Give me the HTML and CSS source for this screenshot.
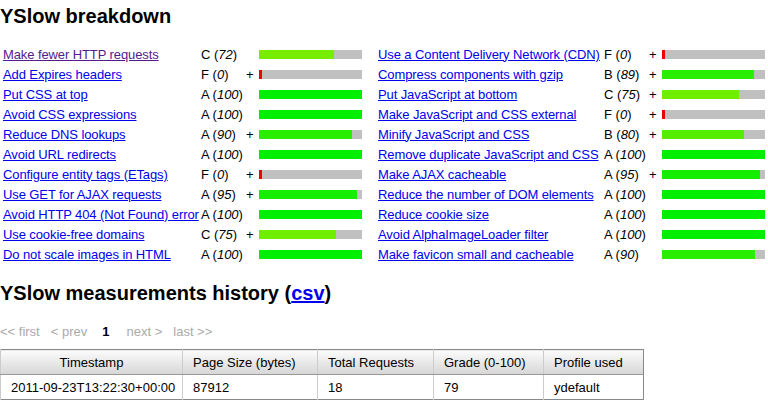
FILE: index.html
```html
<!DOCTYPE html>
<html lang="en">
<head>
    <meta charset="UTF-8">
    <title>YSlow breakdown</title>
    <link rel="stylesheet" href="styles.css">
</head>
<body>
    <h1 class="title">YSlow breakdown</h1>

    <div class="breakdown">
        <div class="rules rules-left">
            <a href="#" class="rule-name visited">Make fewer HTTP requests</a>
            <span class="grade">C (<i>72</i>)</span><span class="plus"></span>
            <span class="bar"><span class="fill" style="width: 73%; background: #77ee00;"></span></span>

            <a href="#" class="rule-name">Add Expires headers</a>
            <span class="grade">F (<i>0</i>)</span><span class="plus">+</span>
            <span class="bar"><span class="fill" style="width: 3px; background: #ee0000;"></span></span>

            <a href="#" class="rule-name">Put CSS at top</a>
            <span class="grade">A (<i>100</i>)</span><span class="plus"></span>
            <span class="bar"><span class="fill" style="width: 100%; background: #00ee00;"></span></span>

            <a href="#" class="rule-name">Avoid CSS expressions</a>
            <span class="grade">A (<i>100</i>)</span><span class="plus"></span>
            <span class="bar"><span class="fill" style="width: 100%; background: #00ee00;"></span></span>

            <a href="#" class="rule-name">Reduce DNS lookups</a>
            <span class="grade">A (<i>90</i>)</span><span class="plus">+</span>
            <span class="bar"><span class="fill" style="width: 90%; background: #2aee00;"></span></span>

            <a href="#" class="rule-name">Avoid URL redirects</a>
            <span class="grade">A (<i>100</i>)</span><span class="plus"></span>
            <span class="bar"><span class="fill" style="width: 100%; background: #00ee00;"></span></span>

            <a href="#" class="rule-name">Configure entity tags (ETags)</a>
            <span class="grade">F (<i>0</i>)</span><span class="plus">+</span>
            <span class="bar"><span class="fill" style="width: 3px; background: #ee0000;"></span></span>

            <a href="#" class="rule-name">Use GET for AJAX requests</a>
            <span class="grade">A (<i>95</i>)</span><span class="plus">+</span>
            <span class="bar"><span class="fill" style="width: 95%; background: #15ee00;"></span></span>

            <a href="#" class="rule-name">Avoid HTTP 404 (Not Found) error</a>
            <span class="grade">A (<i>100</i>)</span><span class="plus"></span>
            <span class="bar"><span class="fill" style="width: 100%; background: #00ee00;"></span></span>

            <a href="#" class="rule-name">Use cookie-free domains</a>
            <span class="grade">C (<i>75</i>)</span><span class="plus">+</span>
            <span class="bar"><span class="fill" style="width: 75%; background: #70ee00;"></span></span>

            <a href="#" class="rule-name">Do not scale images in HTML</a>
            <span class="grade">A (<i>100</i>)</span><span class="plus"></span>
            <span class="bar"><span class="fill" style="width: 100%; background: #00ee00;"></span></span>
        </div>

        <div class="rules rules-right">
            <a href="#" class="rule-name">Use a Content Delivery Network (CDN)</a>
            <span class="grade">F (<i>0</i>)</span><span class="plus">+</span>
            <span class="bar"><span class="fill" style="width: 3px; background: #ee0000;"></span></span>

            <a href="#" class="rule-name">Compress components with gzip</a>
            <span class="grade">B (<i>89</i>)</span><span class="plus">+</span>
            <span class="bar"><span class="fill" style="width: 89%; background: #2aee00;"></span></span>

            <a href="#" class="rule-name">Put JavaScript at bottom</a>
            <span class="grade">C (<i>75</i>)</span><span class="plus">+</span>
            <span class="bar"><span class="fill" style="width: 75%; background: #70ee00;"></span></span>

            <a href="#" class="rule-name">Make JavaScript and CSS external</a>
            <span class="grade">F (<i>0</i>)</span><span class="plus">+</span>
            <span class="bar"><span class="fill" style="width: 3px; background: #ee0000;"></span></span>

            <a href="#" class="rule-name">Minify JavaScript and CSS</a>
            <span class="grade">B (<i>80</i>)</span><span class="plus">+</span>
            <span class="bar"><span class="fill" style="width: 80%; background: #55ee00;"></span></span>

            <a href="#" class="rule-name">Remove duplicate JavaScript and CSS</a>
            <span class="grade">A (<i>100</i>)</span><span class="plus"></span>
            <span class="bar"><span class="fill" style="width: 100%; background: #00ee00;"></span></span>

            <a href="#" class="rule-name">Make AJAX cacheable</a>
            <span class="grade">A (<i>95</i>)</span><span class="plus">+</span>
            <span class="bar"><span class="fill" style="width: 95%; background: #15ee00;"></span></span>

            <a href="#" class="rule-name">Reduce the number of DOM elements</a>
            <span class="grade">A (<i>100</i>)</span><span class="plus"></span>
            <span class="bar"><span class="fill" style="width: 100%; background: #00ee00;"></span></span>

            <a href="#" class="rule-name">Reduce cookie size</a>
            <span class="grade">A (<i>100</i>)</span><span class="plus"></span>
            <span class="bar"><span class="fill" style="width: 100%; background: #00ee00;"></span></span>

            <a href="#" class="rule-name">Avoid AlphaImageLoader filter</a>
            <span class="grade">A (<i>100</i>)</span><span class="plus"></span>
            <span class="bar"><span class="fill" style="width: 100%; background: #00ee00;"></span></span>

            <a href="#" class="rule-name">Make favicon small and cacheable</a>
            <span class="grade">A (<i>90</i>)</span><span class="plus"></span>
            <span class="bar"><span class="fill" style="width: 90%; background: #2aee00;"></span></span>
        </div>
    </div>

    <h2 class="title history-title">YSlow measurements history (<a href="#">csv</a>)</h2>

    <div class="pager">
        <span class="first">&lt;&lt; first</span>
        <span class="prev">&lt; prev</span>
        <span class="current">1</span>
        <span class="next">next &gt;</span>
        <span class="last">last &gt;&gt;</span>
    </div>

    <table class="history">
        <thead>
            <tr>
                <th class="col-time">Timestamp</th>
                <th class="col-size">Page Size (bytes)</th>
                <th class="col-req">Total Requests</th>
                <th class="col-grade">Grade (0-100)</th>
                <th class="col-profile">Profile used</th>
            </tr>
        </thead>
        <tbody>
            <tr>
                <td>2011-09-23T13:22:30+00:00</td>
                <td>87912</td>
                <td>18</td>
                <td>79</td>
                <td>ydefault</td>
            </tr>
        </tbody>
    </table>
</body>
</html>
```

FILE: styles.css
```css
body {
    font-family: "Liberation Sans", Arial, sans-serif;
    font-size: 13px;
    margin: 0;
    background-color: white;
    color: black;
}

a {
    color: #0000ee;
}

.title {
    font-size: 20px;
    font-weight: bold;
    line-height: 23px;
    margin: 5px 0 0;
}

.breakdown {
    display: flex;
    margin-top: 16px;
}

.rules {
    display: grid;
    grid-auto-rows: 20px;
    align-items: center;
}

.rules-left {
    padding-left: 3px;
    grid-template-columns: 198px 44px 14px 103px;
}

.rules-right {
    margin-left: 16px;
    grid-template-columns: 226px 44px 14px 103px;
}

.rule-name {
    white-space: nowrap;
    letter-spacing: -0.1px;
}

.rule-name.visited {
    color: #551a8b;
}

.plus {
    padding-left: 1px;
}

.bar {
    display: block;
    height: 9px;
    background-color: #c0c0c0;
}

.fill {
    display: block;
    height: 100%;
}

.history-title {
    margin-top: 18px;
}

.pager {
    margin-top: 19px;
    line-height: 15px;
    color: #aaaaaa;
    display: flex;
}

.pager .prev {
    margin-left: 11px;
}

.pager .current {
    color: black;
    font-weight: bold;
    margin-left: 15px;
}

.pager .next {
    margin-left: 17px;
}

.pager .last {
    margin-left: 11px;
}

.history {
    margin-top: 10px;
    border-collapse: collapse;
    border: 1px solid #888888;
    table-layout: fixed;
    width: 643px;
}

.history th, .history td {
    box-sizing: border-box;
    height: 25px;
    padding: 0 10px;
    text-align: left;
    font-weight: normal;
    border-left: 1px solid #cccccc;
    white-space: nowrap;
}

.history th {
    background: linear-gradient(#fbfbfb, #d6d6d6);
    border-bottom: 1px solid #999999;
}

.history th.col-time {
    text-align: center;
}

.col-time { width: 182px; }
.col-size { width: 135px; }
.col-req { width: 116px; }
.col-grade { width: 110px; }
.col-profile { width: 100px; }
```
